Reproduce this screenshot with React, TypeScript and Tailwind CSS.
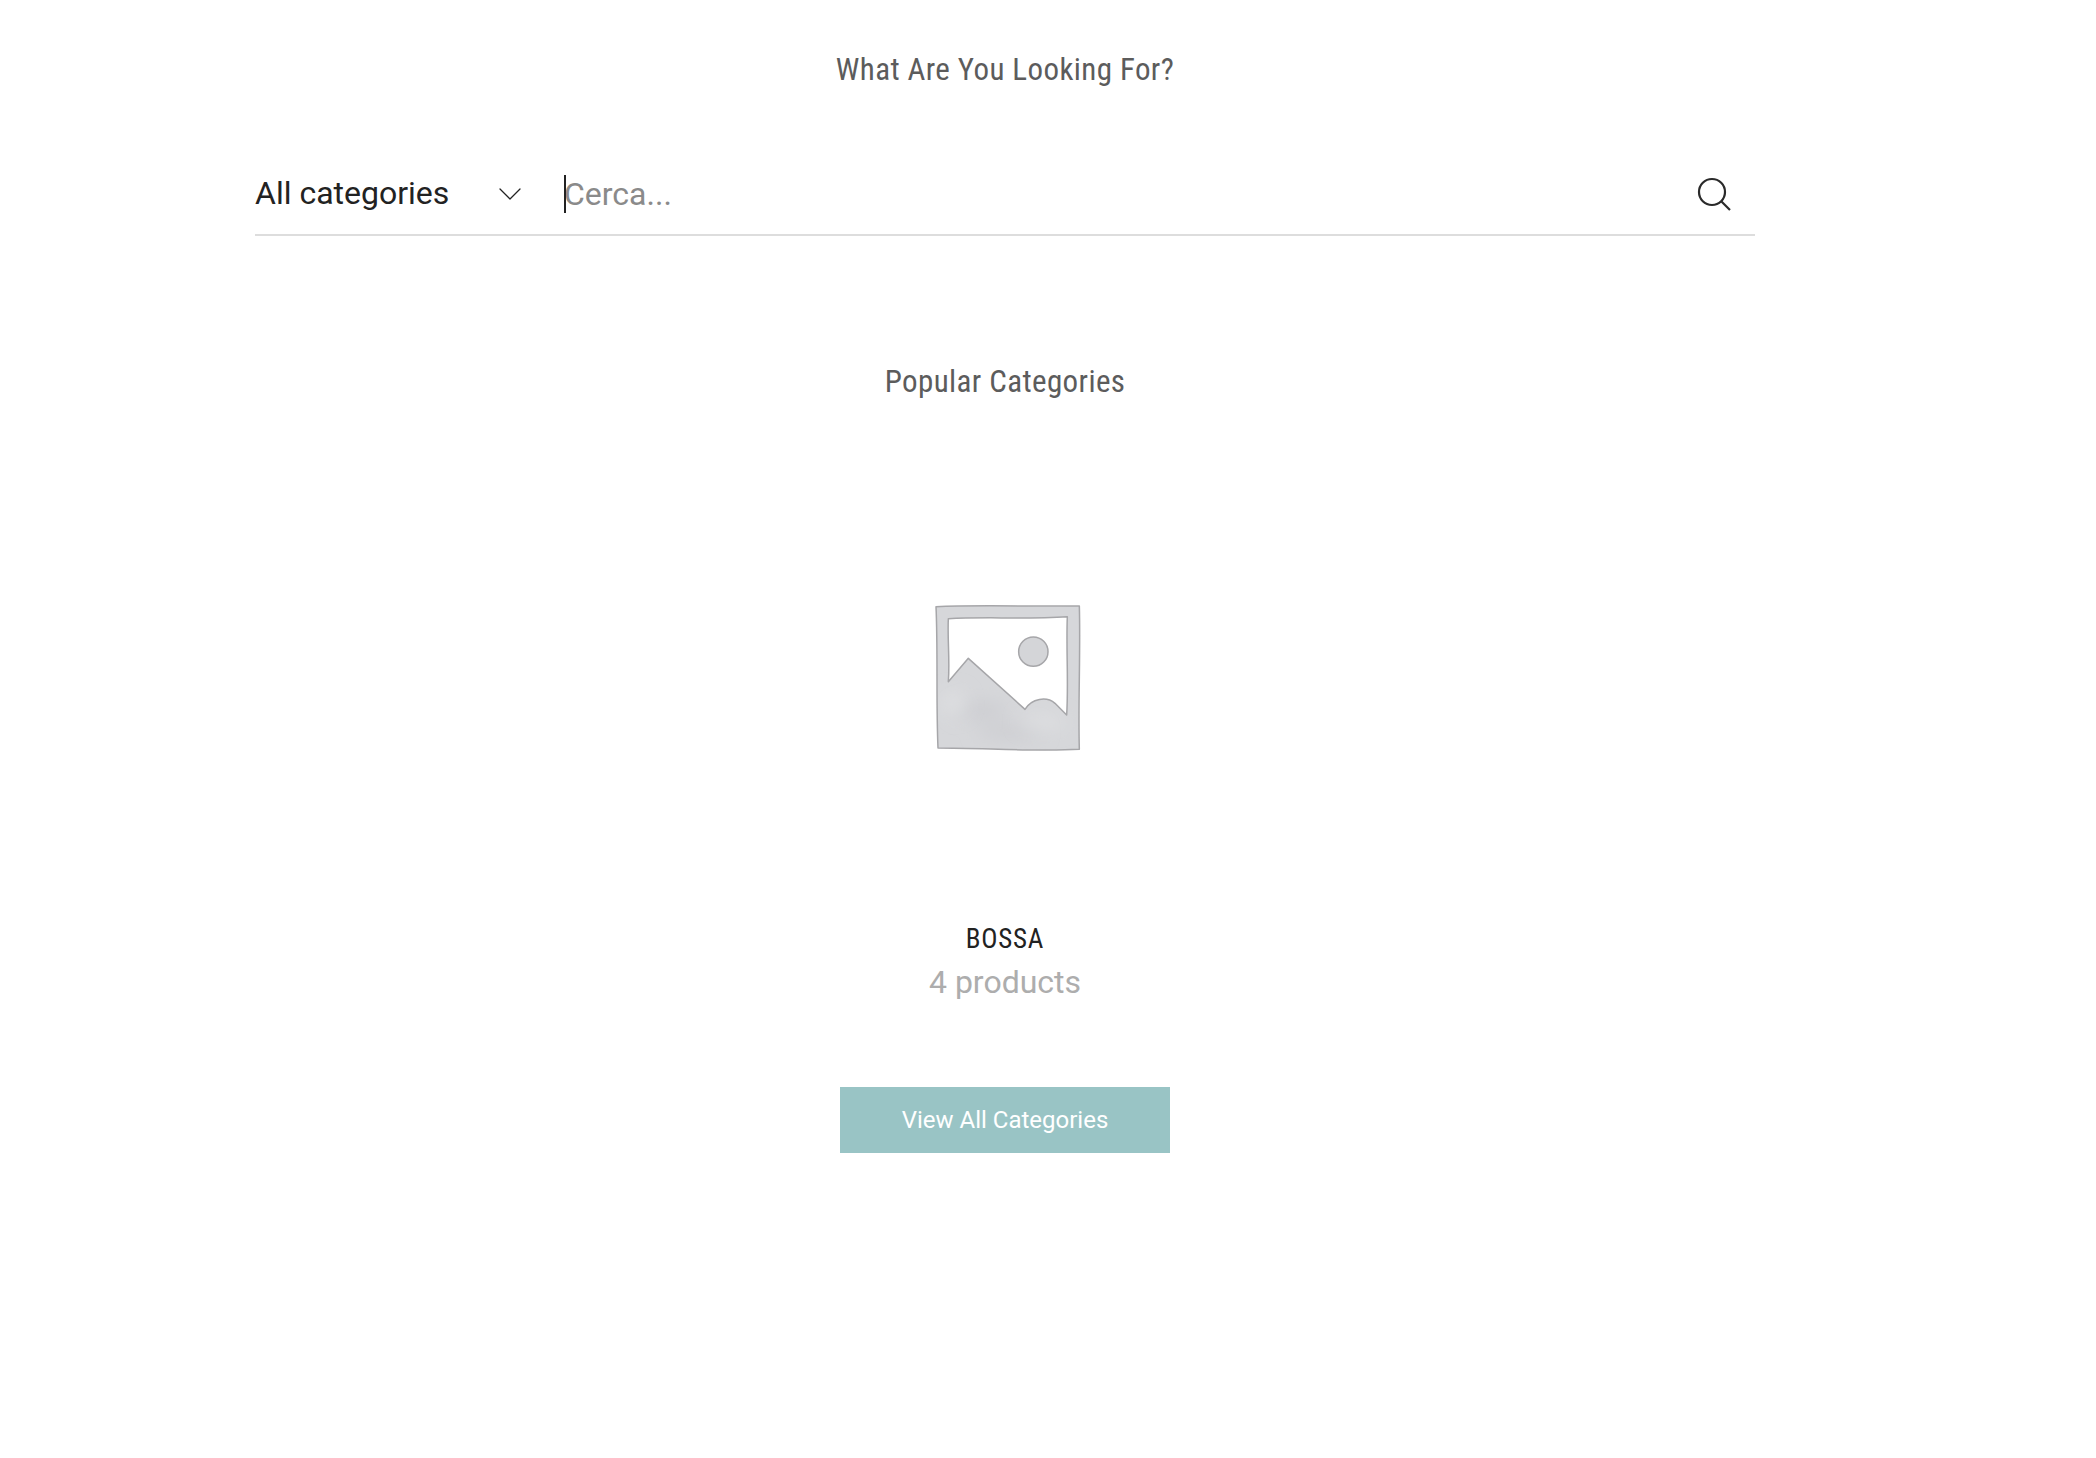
import { ChevronDown } from "lucide-react";

const framePath =
  "M78 50 C200 44 380 50 508 48 C512 180 504 340 508 478 C380 486 220 474 84 474 C78 340 84 180 78 50 Z M115 86 C112 150 120 210 115 275 L175 205 L345 358 C365 325 410 318 435 340 L470 375 C476 280 468 170 472 80 C350 88 220 80 115 86 Z";

const PlaceholderImage = () => (
  <svg width="180" height="180" viewBox="0 0 540 540">
    <defs>
      <clipPath id="frame">
        <path clipRule="evenodd" d={framePath} />
      </clipPath>
      <filter id="soft" x="-50%" y="-50%" width="200%" height="200%">
        <feGaussianBlur stdDeviation="26" />
      </filter>
      <filter id="edge">
        <feGaussianBlur stdDeviation="1.4" />
      </filter>
    </defs>
    <g filter="url(#edge)">
      <path fillRule="evenodd" d={framePath} fill="#d6d7da" />
      <g clipPath="url(#frame)">
        <g filter="url(#soft)" fill="#cdced2">
          <ellipse cx="210" cy="360" rx="80" ry="26" />
          <ellipse cx="300" cy="425" rx="100" ry="22" />
        </g>
        <g filter="url(#soft)" fill="#dedfe1">
          <ellipse cx="130" cy="340" rx="36" ry="36" />
          <ellipse cx="400" cy="395" rx="70" ry="22" />
        </g>
      </g>
      <path fillRule="evenodd" d={framePath} fill="none" stroke="#a6a6a9" strokeWidth="4.5" strokeLinejoin="round" />
      <circle cx="370" cy="185" r="44" fill="#d4d5d8" stroke="#a6a6a9" strokeWidth="4.5" />
    </g>
  </svg>
);

const App = () => {
  return (
    <div className="min-h-[1458px] bg-white font-['Roboto',sans-serif]">
      <div className="ml-[255px] w-[1500px] pt-[49px]">
        <h2 className="text-center text-[31px] leading-[42px] font-normal tracking-[0.4px] text-[#5c5c5c] [font-stretch:75%]">
          What Are You Looking For?
        </h2>

        <div className="mt-[55px] flex h-[90px] items-center border-b-2 border-[#dddddd] pt-[8px]">
          <div className="flex w-[309px] items-center pr-[34px]">
            <span className="flex-1 -translate-y-px text-[32px] leading-[40px] text-[#222222]">All categories</span>
            <ChevronDown size={40} strokeWidth={0.75} className="text-[#222222]" />
          </div>
          <div className="relative flex h-[38px] flex-1 items-center">
            <span className="absolute top-0 left-0 h-[38px] w-[2px] bg-[#222222]" />
            <span className="flex-1 text-[32px] leading-[38px] text-[#8a8a8a]">Cerca...</span>
          </div>
          <svg width="36" height="36" viewBox="0 0 36 36" fill="none" stroke="#2a2a2a" strokeWidth="2.2" className="mr-[22px] translate-y-px">
            <circle cx="15" cy="15" r="13" />
            <path d="M24.5 24.5 L33 33" />
          </svg>
        </div>

        <h2 className="mt-[125px] text-center text-[31px] leading-[42px] font-normal tracking-[0.4px] text-[#5c5c5c] [font-stretch:75%]">
          Popular Categories
        </h2>

        <div className="mt-[187px] flex justify-center pr-[11px]">
          <PlaceholderImage />
        </div>

        <div className="mt-[150px] text-center text-[27px] leading-[38px] tracking-[0.75px] text-[#222222] [font-stretch:75%]">
          BOSSA
        </div>
        <div className="mt-[2px] text-center text-[32px] leading-[44px] text-[#adadad]">4 products</div>

        <div className="mt-[83px] flex justify-center">
          <button className="h-[66px] w-[330px] bg-[#99c4c5] text-[24px] text-white">View All Categories</button>
        </div>
      </div>
    </div>
  );
};

export default App;
